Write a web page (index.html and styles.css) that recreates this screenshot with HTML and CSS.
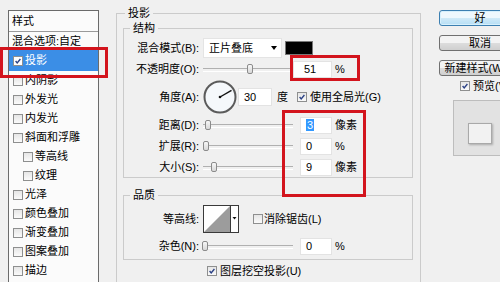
FILE: index.html
```html
<!DOCTYPE html>
<html lang="zh-CN">
<head>
  <meta charset="UTF-8">
  <meta name="viewport" content="width=device-width, initial-scale=1.0">
  <title>图层样式 - 投影</title>
  <link rel="stylesheet" href="styles.css">
</head>
<body>

  <div class="dialog">

    <!-- 样式列表 -->
    <div class="style-list">
      <div class="list-head">样式</div>
      <div class="list-item plain">混合选项:自定</div>
      <div class="list-item selected"><span class="cb checked"><svg viewBox="0 0 10 10"><path d="M2 5 L4 7.5 L8 2.5"/></svg></span>投影</div>
      <div class="list-item"><span class="cb"></span>内阴影</div>
      <div class="list-item"><span class="cb"></span>外发光</div>
      <div class="list-item"><span class="cb"></span>内发光</div>
      <div class="list-item"><span class="cb"></span>斜面和浮雕</div>
      <div class="list-item sub"><span class="cb"></span>等高线</div>
      <div class="list-item sub"><span class="cb"></span>纹理</div>
      <div class="list-item"><span class="cb"></span>光泽</div>
      <div class="list-item"><span class="cb"></span>颜色叠加</div>
      <div class="list-item"><span class="cb"></span>渐变叠加</div>
      <div class="list-item"><span class="cb"></span>图案叠加</div>
      <div class="list-item"><span class="cb"></span>描边</div>
    </div>

    <!-- 投影设置 -->
    <fieldset class="group outer">
      <legend>投影</legend>

      <fieldset class="group inner">
        <legend>结构</legend>
        <div class="row first">
          <span class="lbl">混合模式(B):</span>
          <div class="select">正片叠底<span class="arrow"></span></div>
          <span class="swatch"></span>
        </div>
        <div class="row">
          <span class="lbl">不透明度(O):</span>
          <div class="slider short"><span class="thumb" style="left: 53%;"></span></div>
          <span class="field wide">51</span><span class="unit">%</span>
        </div>
        <div class="row angle">
          <span class="lbl">角度(A):</span>
          <svg class="dial" width="34" height="34" viewBox="0 0 34 34">
            <circle cx="17" cy="17" r="15.5" fill="#f5f8fb" stroke="#5b5b5b" stroke-width="2"/>
            <line x1="17" y1="17" x2="28.5" y2="10.4" stroke="#111" stroke-width="1.4"/>
            <circle cx="17" cy="17" r="1.3" fill="#111"/>
          </svg>
          <span class="field angle-field">30</span><span class="unit deg">度</span>
          <span class="cb checked global"><svg viewBox="0 0 10 10"><path d="M2 5 L4 7.5 L8 2.5"/></svg></span>
          <span class="cb-label">使用全局光(G)</span>
        </div>
        <div class="row">
          <span class="lbl">距离(D):</span>
          <div class="slider"><span class="thumb" style="left: 5%;"></span></div>
          <span class="field"><span class="sel">3</span></span><span class="unit">像素</span>
        </div>
        <div class="row">
          <span class="lbl">扩展(R):</span>
          <div class="slider"><span class="thumb" style="left: 3%;"></span></div>
          <span class="field">0</span><span class="unit">%</span>
        </div>
        <div class="row">
          <span class="lbl">大小(S):</span>
          <div class="slider"><span class="thumb" style="left: 12%;"></span></div>
          <span class="field">9</span><span class="unit">像素</span>
        </div>
      </fieldset>

      <fieldset class="group quality">
        <legend>品质</legend>
        <div class="row contour">
          <span class="lbl">等高线:</span>
          <svg class="curve" width="36" height="28" viewBox="0 0 36 28">
            <rect x="0.5" y="0.5" width="27" height="27" fill="#fff" stroke="#3a3a3a"/>
            <polygon points="1,27 27,1 27,27" fill="#9c9c9c"/>
            <rect x="27.5" y="0.5" width="8" height="27" fill="#fff" stroke="#3a3a3a"/>
            <polygon points="29.5,12 33.5,12 31.5,14.5" fill="#111"/>
          </svg>
          <span class="cb antialias"></span>
          <span class="cb-label">消除锯齿(L)</span>
        </div>
        <div class="row noise">
          <span class="lbl">杂色(N):</span>
          <div class="slider"><span class="thumb" style="left: 2%;"></span></div>
          <span class="field">0</span><span class="unit">%</span>
        </div>
      </fieldset>

      <div class="knockout">
        <span class="cb checked"><svg viewBox="0 0 10 10"><path d="M2 5 L4 7.5 L8 2.5"/></svg></span>
        <span class="cb-label">图层挖空投影(U)</span>
      </div>
    </fieldset>

    <!-- 按钮与预览 -->
    <div class="side">
      <button class="btn default">好</button>
      <button class="btn">取消</button>
      <button class="btn">新建样式(W)...</button>
      <div class="preview-check">
        <span class="cb checked"><svg viewBox="0 0 10 10"><path d="M2 5 L4 7.5 L8 2.5"/></svg></span>
        <span class="cb-label">预览(V)</span>
      </div>
      <div class="preview-box"><div class="preview-swatch"></div></div>
    </div>

  </div>

  <!-- 红色标注框 -->
  <div class="mark mark-list"></div>
  <div class="mark mark-opacity"></div>
  <div class="mark mark-size"></div>

</body>
</html>
```

FILE: styles.css
```css
* {
  box-sizing: border-box;
}
body {
  margin: 0;
  width: 500px;
  height: 282px;
  overflow: hidden;
  position: relative;
  background-color: #f0f0f0;
  font-family: "Liberation Sans", "Noto Sans CJK SC", sans-serif;
  font-size: 11px;
  line-height: 1;
  color: #000;
}
.dialog {
  display: flex;
  align-items: flex-start;
  width: 540px;
}
.dialog > * {
  flex-shrink: 0;
}

/* 样式列表 */
.style-list {
  width: 91px;
  height: 290px;
  margin: 10px 0 0 8px;
  border: 1px solid #6b6b6b;
  background-color: #fbfbfb;
}
.list-head {
  height: 21px;
  line-height: 20px;
  padding-left: 3px;
  border-bottom: 1px solid #9a9a9a;
}
.list-item {
  display: flex;
  align-items: center;
  height: 19px;
  padding-left: 4px;
}
.list-item.plain {
  height: 18px;
  padding-left: 3px;
}
.list-item.selected {
  height: 21px;
  background-color: #3b8ee6;
  color: #fff;
}
.list-item.sub {
  padding-left: 14px;
}
.list-item .cb {
  margin-right: 2px;
}

/* 复选框 */
.cb {
  display: inline-block;
  width: 10px;
  height: 10px;
  border: 1px solid #8e8f8f;
  background: linear-gradient(#e6e6e6, #fafafa);
}
.cb svg {
  display: block;
  width: 8px;
  height: 8px;
}
.cb svg path {
  fill: none;
  stroke: #2b4185;
  stroke-width: 1.7;
}
.selected .cb {
  background: #fff;
}

/* 分组框 */
.group {
  margin: 0;
  min-width: 0;
  border: 1px solid #cbcbcb;
}
.group legend {
  padding: 0 3px;
}
.outer {
  width: 305px;
  margin: 5px 0 0 17px;
  padding: 0 7px 12px 6px;
}
.outer > legend {
  line-height: 16px;
  margin-left: 2px;
}
.inner,
.quality {
  padding: 0;
}
.inner > legend,
.quality > legend {
  line-height: 14px;
  margin-left: 6px;
}
.quality {
  margin-top: 10px;
  padding-bottom: 3px;
}

/* 行 */
.row {
  display: flex;
  align-items: center;
  height: 20px;
  margin-top: 1px;
}
.row.first {
  margin-top: 3px;
}
.row.angle {
  height: 34px;
}
.row.contour {
  height: 28px;
  margin-top: 3px;
}
.row.noise {
  margin-top: 3px;
}
.lbl {
  width: 75px;
  margin-right: 4px;
  text-align: right;
}

.select {
  display: flex;
  align-items: center;
  width: 79px;
  height: 20px;
  padding-left: 5px;
  background-color: #fff;
  border: 1px solid #e4e4e4;
}
.select .arrow {
  margin-left: auto;
  margin-right: 4px;
  border-left: 3px solid transparent;
  border-right: 3px solid transparent;
  border-top: 4px solid #000;
}
.swatch {
  width: 28px;
  height: 14px;
  margin-left: 3px;
  background-color: #000;
  border: 1px solid #777;
}

/* 滑块 */
.slider {
  position: relative;
  width: 90px;
  height: 12px;
}
.slider.short {
  width: 88px;
}
.slider::before {
  content: "";
  position: absolute;
  left: 0;
  right: 0;
  top: 5px;
  height: 2px;
  border-top: 1px solid #b0b0b0;
  border-bottom: 1px solid #fff;
}
.thumb {
  position: absolute;
  top: 1px;
  width: 6px;
  height: 10px;
  margin-left: -3px;
  border: 1px solid #8b8b8b;
  border-radius: 2px;
  background: linear-gradient(#f7f7f7, #d8d8d8);
}

/* 输入框 */
.field {
  width: 32px;
  height: 17px;
  margin-left: 7px;
  padding-left: 5px;
  line-height: 15px;
  background-color: #fff;
  border: 1px solid #e3e3e3;
}
.field.wide {
  width: 39px;
  margin-left: 2px;
  padding-left: 10px;
}
.field.angle-field {
  width: 34px;
  height: 18px;
  margin-left: 1px;
  line-height: 16px;
}
.sel {
  background-color: #3399ff;
  color: #fff;
  padding: 0 1px;
}
.unit {
  margin-left: 3px;
}
.unit.deg {
  margin-left: 5px;
}
.cb.global {
  margin-left: 9px;
}
.cb-label {
  margin-left: 3px;
}
.dial {
  display: block;
}
.curve {
  display: block;
}
.cb.antialias {
  margin-left: 14px;
}
.contour .cb-label {
  margin-left: 1px;
}

.knockout {
  display: flex;
  align-items: center;
  height: 14px;
  margin: 4px 0 0 84px;
}

/* 右侧按钮 */
.side {
  width: 82px;
  margin: 10px 0 0 18px;
}
.btn {
  display: block;
  width: 82px;
  height: 16px;
  padding: 0;
  font: inherit;
  color: #000;
  border: 1px solid #707070;
  border-radius: 3px;
  background: linear-gradient(#f3f3f3 50%, #dddddd 50%, #cfcfcf);
}
.btn + .btn {
  margin-top: 9px;
}
.btn.default {
  border-color: #3c7fb1;
  background: linear-gradient(#eef8fd 50%, #cfeaf8 50%, #b6def5);
  box-shadow: inset 0 0 0 1px #d6f0fc;
}
.preview-check {
  display: flex;
  align-items: center;
  height: 14px;
  margin-top: 3px;
  padding-left: 21px;
}
.preview-box {
  width: 60px;
  height: 56px;
  margin: 7px 0 0 14px;
  padding: 22px 0 0 14px;
  background-color: #e2e2e2;
  border: 1px solid #bdbdbd;
}
.preview-swatch {
  width: 24px;
  height: 21px;
  background-color: #f2f2f2;
  border: 1px solid #a9a9a9;
  box-shadow: 1px 1px 2px rgba(0, 0, 0, 0.25);
}

/* 红色标注 */
.mark {
  position: absolute;
  border: 3px solid #d3141d;
}
.mark-list {
  left: 0;
  top: 47px;
  width: 108px;
  height: 31px;
}
.mark-opacity {
  left: 290px;
  top: 55px;
  width: 70px;
  height: 26px;
}
.mark-size {
  left: 282px;
  top: 110px;
  width: 84px;
  height: 87px;
}
```
